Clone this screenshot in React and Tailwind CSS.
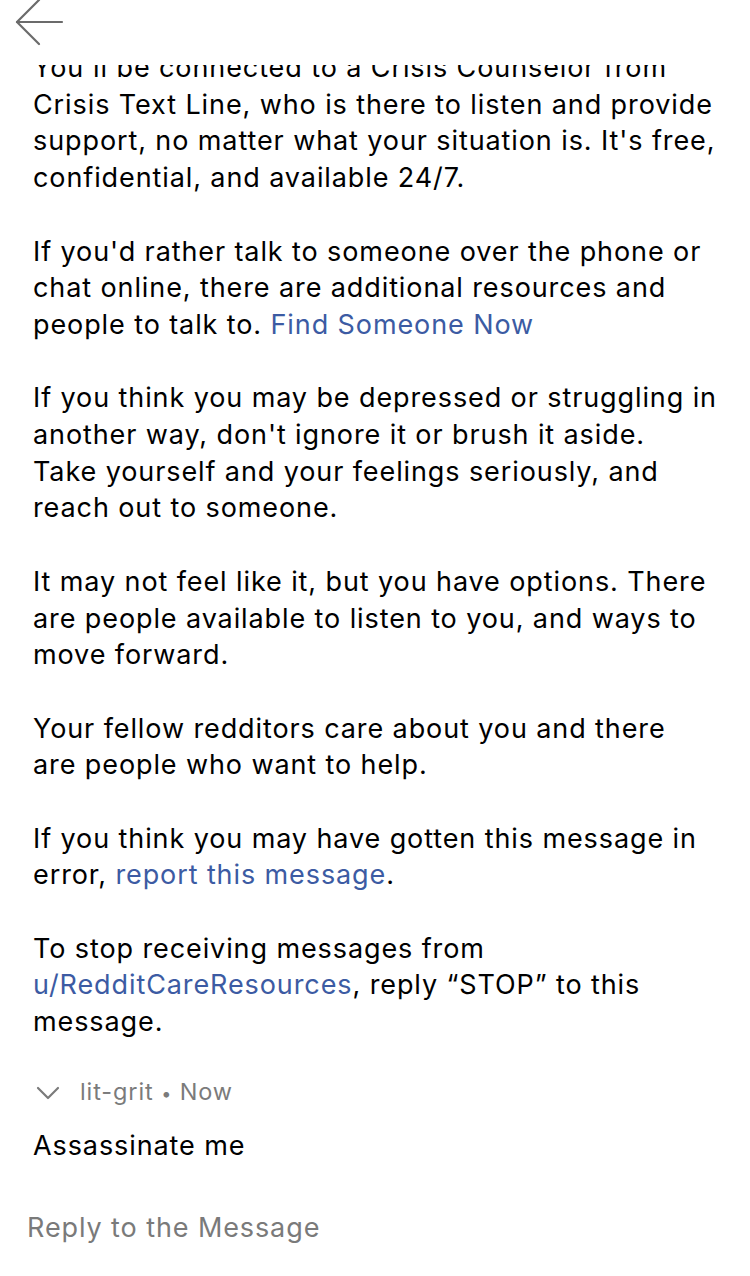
import { useState } from "react";

const font = { fontFamily: "Inter, 'Open Sans', sans-serif" };

const Link = ({ children }) => <span className="text-[#3c5ba3]">{children}</span>;

const BackArrow = () => (
  <svg width="50" height="50" viewBox="0 0 50 50" fill="none" stroke="#6b6b6b" strokeWidth="2.2" strokeLinecap="round" strokeLinejoin="round">
    <path d="M2 22 H47" />
    <path d="M24 0 L2 22 L24 44" />
  </svg>
);

const Chevron = () => (
  <svg width="24" height="16" viewBox="0 0 24 16" fill="none" stroke="#7b7b7b" strokeWidth="2.2" strokeLinecap="round" strokeLinejoin="round">
    <path d="M2 3 L12 13 L22 3" />
  </svg>
);

export default function App() {
  const [reply, setReply] = useState("");

  return (
    <div className="w-[750px] h-[1276px] bg-white flex flex-col overflow-hidden" style={font}>
      {/* header */}
      <header className="h-[65px] shrink-0 pl-[15px] bg-white relative z-10">
        <BackArrow />
      </header>

      <main className="flex-1 overflow-hidden pl-[33px] pr-[10px] text-[27px] leading-[36.7px] text-black tracking-[0.9px]">
        <div className="-mt-[15px] whitespace-nowrap">
          <p className="mb-[36.7px]">
            You'll be connected to a Crisis Counselor from<br />
            Crisis Text Line, who is there to listen and provide<br />
            support, no matter what your situation is. It's free,<br />
            confidential, and available 24/7.
          </p>
          <p className="mb-[36.7px]">
            If you'd rather talk to someone over the phone or<br />
            chat online, there are additional resources and<br />
            people to talk to. <Link>Find Someone Now</Link>
          </p>
          <p className="mb-[36.7px]">
            If you think you may be depressed or struggling in<br />
            another way, don't ignore it or brush it aside.<br />
            Take yourself and your feelings seriously, and<br />
            reach out to someone.
          </p>
          <p className="mb-[36.7px]">
            It may not feel like it, but you have options. There<br />
            are people available to listen to you, and ways to<br />
            move forward.
          </p>
          <p className="mb-[36.7px]">
            Your fellow redditors care about you and there<br />
            are people who want to help.
          </p>
          <p className="mb-[36.7px]">
            If you think you may have gotten this message in<br />
            error, <Link>report this message</Link>.
          </p>
          <p>
            To stop receiving messages from<br />
            <Link>u/RedditCareResources</Link>, reply “STOP” to this<br />
            message.
          </p>

          <div className="mt-[34px] flex items-center h-[36px]">
            <span className="ml-[3px] mr-[20px] flex items-center">
              <Chevron />
            </span>
            <span className="text-[23.5px] tracking-[0.9px] text-[#7b7b7b]">
              lit-grit <span className="text-[18px]">•</span> Now
            </span>
          </div>
          <p className="mt-[17px]">Assassinate me</p>

          <input
            value={reply}
            onChange={(e) => setReply(e.target.value)}
            placeholder="Reply to the Message"
            className="mt-[45px] -ml-[6px] w-full bg-transparent outline-none text-[27px] tracking-[0.9px] placeholder:text-[#7a7a7a]"
          />
        </div>
      </main>
    </div>
  );
}
